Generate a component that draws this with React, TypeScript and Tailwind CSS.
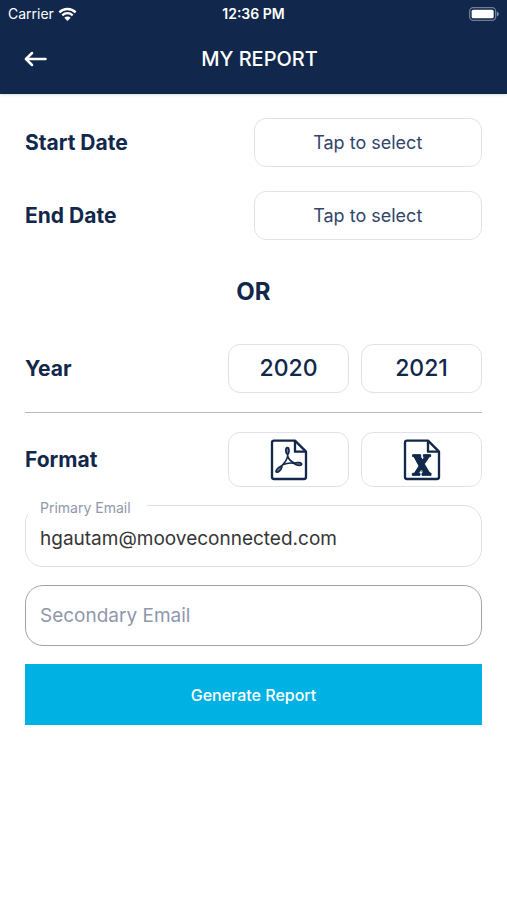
import { useState } from 'react'
import type { ReactNode } from 'react'

const outlineButton =
  'flex items-center justify-center rounded-xl border border-[#dfe2e8] bg-white'

const years = ['2020', '2021']

function WifiIcon() {
  return (
    <svg width="19" height="14" viewBox="0 0 57 42" fill="none" aria-hidden="true">
      <path d="M4 16a35 35 0 0 1 49 0" stroke="white" strokeWidth="7" />
      <path d="M13 25a22 22 0 0 1 31 0" stroke="white" strokeWidth="7" />
      <path d="M28.500 42L19 32.500a13.500 13.500 0 0 1 19 0z" fill="white" />
    </svg>
  )
}

function BatteryIcon() {
  return (
    <svg width="30" height="14" viewBox="0 0 90 42" fill="none" aria-hidden="true">
      <rect x="2" y="2" width="78" height="38" rx="11" stroke="#6f7d96" strokeWidth="4" />
      <rect x="8" y="8" width="66" height="26" rx="5" fill="white" />
      <path d="M84 14c7 2 7 12 0 14z" fill="#8792a6" />
    </svg>
  )
}

function BackIcon() {
  return (
    <svg width="24" height="16" viewBox="0 0 24 16" fill="none" stroke="white" strokeWidth="2.500" strokeLinecap="round" strokeLinejoin="round" aria-hidden="true">
      <path d="M21.500 8H2" />
      <path d="M8 2L2 8L8 14" />
    </svg>
  )
}

function FileIcon({ children }: { children: ReactNode }) {
  return (
    <svg width="38" height="42" viewBox="0 0 114 126" fill="none" stroke="#11274b" strokeWidth="7" strokeLinejoin="round" aria-hidden="true">
      <path d="M12 5H75L108 38V114a6 6 0 0 1-6 6H12a6 6 0 0 1-6-6V11a6 6 0 0 1 6-6z" />
      <path d="M75 5V38H108" />
      {children}
    </svg>
  )
}

function PdfIcon() {
  return (
    <FileIcon>
      <g strokeWidth="5">
        <path d="M51 45C46 40 46 27 52 26C59 26 58 40 54 45z" fill="#6f7d96" />
        <path d="M53 45V52C57 62 65 69 74 73" />
        <path d="M53 52C50 64 42 74 33 82" />
        <path d="M38 77C50 72 64 71 75 73" />
        <path d="M33 82C24 86 16 94 19 99C25 102 33 93 36 83z" fill="#6f7d96" />
        <path d="M74 72C82 69 95 71 95 76C94 82 82 79 74 75z" fill="#6f7d96" />
      </g>
    </FileIcon>
  )
}

function ExcelIcon() {
  return (
    <FileIcon>
      <path
        d="M29 47H53V54L58 63L65 53H61V47H83V53H79L64 75L80 102H84V109H57V103H60L54 92L46 103H51V109H28V103H34L48 81L33 53H29z"
        fill="#11274b"
        stroke="#11274b"
        strokeWidth="3"
      />
      <path d="M51 100L56 93L59 101" stroke="#c3cad5" strokeWidth="2" />
    </FileIcon>
  )
}

function DateRow({ label }: { label: string }) {
  return (
    <div className="flex items-center justify-between">
      <span className="text-[21px] font-bold">{label}</span>
      <button type="button" aria-label={`${label}, tap to select`} className={`${outlineButton} h-[49px] w-1/2 text-lg text-[#32456b]`}>
        Tap to select
      </button>
    </div>
  )
}

export default function App() {
  const [primaryEmail, setPrimaryEmail] = useState('hgautam@mooveconnected.com')
  const [secondaryEmail, setSecondaryEmail] = useState('')

  return (
    <div className="min-h-screen bg-white font-['Inter',sans-serif] text-[#11274b]">
      <header className="bg-[#11274b] text-white shadow">
        <div className="grid h-7 grid-cols-3 items-center px-2 text-sm">
          <div className="flex items-center gap-1">
            <span>Carrier</span>
            <WifiIcon />
          </div>
          <span className="text-center font-semibold">12:36 PM</span>
          <div className="flex justify-end">
            <BatteryIcon />
          </div>
        </div>
        <div className="grid h-[66px] grid-cols-[1fr_auto_1fr] items-center pr-3 pb-1 pl-6">
          <button type="button" aria-label="Back" className="justify-self-start">
            <BackIcon />
          </button>
          <h1 className="text-xl font-medium">MY REPORT</h1>
        </div>
      </header>

      <main className="flex flex-col px-[25px] pt-6">
        <div className="flex flex-col gap-6">
          <DateRow label="Start Date" />
          <DateRow label="End Date" />
        </div>

        <p className="my-9 text-center text-2xl font-bold">OR</p>

        <div className="flex items-center justify-between border-b border-[#b5babd] pb-[19px]">
          <span className="text-[21px] font-bold">Year</span>
          <div className="grid w-5/9 grid-cols-2 gap-3">
            {years.map((year) => (
              <button key={year} type="button" className={`${outlineButton} h-[49px] text-[23px] font-medium`}>
                {year}
              </button>
            ))}
          </div>
        </div>

        <div className="flex items-center justify-between pt-[19px]">
          <span className="text-[21px] font-bold">Format</span>
          <div className="grid w-5/9 grid-cols-2 gap-3">
            <button type="button" aria-label="PDF" className={`${outlineButton} h-[55px]`}>
              <PdfIcon />
            </button>
            <button type="button" aria-label="Excel" className={`${outlineButton} h-[55px]`}>
              <ExcelIcon />
            </button>
          </div>
        </div>

        <form className="mt-[18px] flex flex-col gap-[18px]" onSubmit={(e) => e.preventDefault()}>
          <div className="relative">
            {/* label sits over the field's border and hides it */}
            <label htmlFor="primary-email" className="absolute -top-[7px] left-[3px] bg-white pr-4 pl-3 text-sm leading-5 text-[#8f97ad]">
              Primary Email
            </label>
            <input
              id="primary-email"
              type="email"
              value={primaryEmail}
              onChange={(e) => setPrimaryEmail(e.target.value)}
              className="h-[62px] w-full rounded-[18px] border border-[#e0e0e2] px-3.5 pt-1 text-[19px] text-[#363636]"
            />
          </div>
          <input
            type="email"
            aria-label="Secondary Email"
            placeholder="Secondary Email"
            value={secondaryEmail}
            onChange={(e) => setSecondaryEmail(e.target.value)}
            className="h-[61px] w-full rounded-[18px] border border-[#a3a3a3] px-3.5 text-[19px] placeholder:text-[#8f97ad]"
          />
          <button type="submit" className="h-[61px] bg-[#00b1e4] text-base font-medium text-white">
            Generate Report
          </button>
        </form>
      </main>
    </div>
  )
}
